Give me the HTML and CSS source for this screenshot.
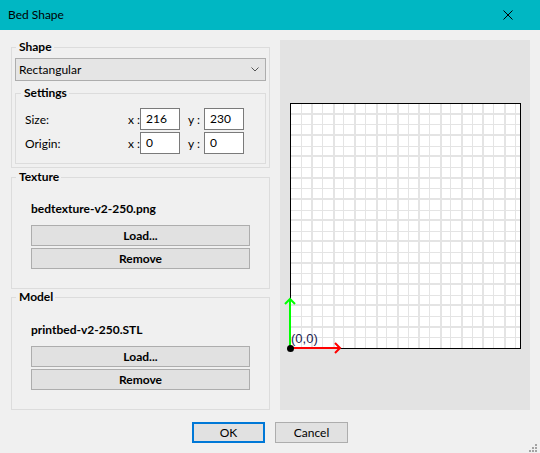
FILE: index.html
```html
<!DOCTYPE html>
<html>
<head>
<meta charset="utf-8">
<title>Bed Shape</title>
<link rel="stylesheet" href="styles.css">
</head>
<body>
<div class="window">
  <div class="titlebar">
    <span class="title">Bed Shape</span>
    <svg class="close" viewBox="0 0 10 10" width="10" height="10"><path d="M0.5 0.5L9.5 9.5M9.5 0.5L0.5 9.5" stroke="#000" stroke-width="1" fill="none"/></svg>
  </div>
  <div class="content">
    <div class="left">
      <fieldset class="group shape">
        <legend>Shape</legend>
        <div class="combo">
          <span>Rectangular</span>
          <svg class="chev" viewBox="0 0 8 5" width="8" height="5"><path d="M0.5 0.5L4 4L7.5 0.5" stroke="#555" stroke-width="1" fill="none"/></svg>
        </div>
        <fieldset class="group settings">
          <legend>Settings</legend>
          <div class="row">
            <span class="lbl">Size:</span>
            <span class="axis">x :</span><span class="input">216</span>
            <span class="axis y">y :</span><span class="input">230</span>
          </div>
          <div class="row">
            <span class="lbl">Origin:</span>
            <span class="axis">x :</span><span class="input">0</span>
            <span class="axis y">y :</span><span class="input">0</span>
          </div>
        </fieldset>
      </fieldset>
      <fieldset class="group file texture">
        <legend>Texture</legend>
        <div class="fname">bedtexture-v2-250.png</div>
        <button class="gbtn first">Load...</button>
        <button class="gbtn">Remove</button>
      </fieldset>
      <fieldset class="group file model">
        <legend>Model</legend>
        <div class="fname">printbed-v2-250.STL</div>
        <button class="gbtn first">Load...</button>
        <button class="gbtn">Remove</button>
      </fieldset>
    </div>
    <div class="preview">
      <svg width="250" height="370" viewBox="0 0 250 370">
        <rect x="10" y="63" width="231" height="245" fill="#fff"/>
        <path d="M21.5 63V308M42.5 63V308M63.5 63V308M85.5 63V308M106.5 63V308M128.5 63V308M149.5 63V308M170.5 63V308M192.5 63V308M213.5 63V308M235.5 63V308M10 297.5H241M10 276.5H241M10 255.5H241M10 233.5H241M10 212.5H241M10 191.5H241M10 170.5H241M10 148.5H241M10 127.5H241M10 106.5H241M10 84.5H241" stroke="#e4e4e4" stroke-width="1" fill="none"/>
        <path d="M32 63V308M54 63V308M75 63V308M97 63V308M118 63V308M139 63V308M161 63V308M182 63V308M203 63V308M225 63V308M10 287H241M10 265H241M10 244H241M10 223H241M10 201H241M10 180H241M10 159H241M10 138H241M10 116H241M10 95H241M10 74H241" stroke="#e4e4e4" stroke-width="2" fill="none"/>
        <rect x="10.5" y="63.5" width="230" height="245" fill="none" stroke="#000" stroke-width="1"/>
        <path d="M240.5 63V309" stroke="#000" stroke-width="1"/>
        <text x="11" y="302.5" class="origin">(0,0)</text>
        <path d="M10 308V259M5 264L10 259L15 264" stroke="#00ff00" stroke-width="2" fill="none"/>
        <path d="M10 308H60M55 303L60 308L55 313" stroke="#ff0000" stroke-width="2" fill="none"/>
        <circle cx="10.5" cy="308.5" r="3.5" fill="#000"/>
      </svg>
    </div>
  </div>
  <div class="footer">
    <button class="btn ok">OK</button>
    <button class="btn">Cancel</button>
  </div>
  <svg class="grip" width="12" height="11" viewBox="0 0 12 11">
    <rect x="7" y="2" width="2" height="2"/>
    <rect x="4" y="5" width="2" height="2"/>
    <rect x="7" y="5" width="2" height="2"/>
    <rect x="1" y="8" width="2" height="2"/>
    <rect x="4" y="8" width="2" height="2"/>
    <rect x="7" y="8" width="2" height="2"/>
  </svg>
</div>
</body>
</html>
```
FILE: styles.css
```css
* { box-sizing: border-box; }
html, body { margin: 0; padding: 0; }
body {
  width: 540px;
  height: 453px;
  background: #f0f0f0;
  font-family: Lato, "Noto Sans", sans-serif;
  font-size: 12px;
  color: #000;
  overflow: hidden;
}
.window { position: relative; width: 540px; height: 453px; }
.titlebar {
  height: 30px;
  background: #00b7c3;
  display: flex;
  align-items: center;
  justify-content: space-between;
  padding: 0 27px 0 8px;
}
.title { font-size: 12px; font-weight: 400; line-height: 16px; }
.close { display: block; }

.content {
  display: flex;
  gap: 10px;
  padding: 10px 10px 0 11px;
  height: 380px;
}
.left {
  width: 259px;
  display: flex;
  flex-direction: column;
  margin-top: -1px;
}
.group {
  margin: 0;
  border: 1px solid #dcdcdc;
  min-width: 0;
}
.group > legend {
  font-weight: bold;
  line-height: 16px;
  padding: 0 2px 0 3px;
  margin-left: 1px;
}
.shape { padding: 0 3px 3px; }
.combo {
  margin-top: 3px;
  height: 23px;
  background: #e5e5e5;
  border: 1px solid #adadad;
  display: flex;
  align-items: center;
  justify-content: space-between;
  padding: 0 6px 0 3px;
}
.chev { display: block; }
.settings {
  margin-top: 4px;
  padding: 7px 9px 9px;
}
.settings > legend { margin-left: -4px; }
.row { display: flex; align-items: center; height: 22px; }
.row + .row { margin-top: 2px; }
.lbl { width: 103px; }
.axis { width: 12px; flex-shrink: 0; white-space: nowrap; }
.axis.y { margin-left: 8px; margin-right: 4px; }
.input {
  width: 40px;
  height: 22px;
  flex-shrink: 0;
  background: #fff;
  border: 1px solid #7a7a7a;
  padding-left: 5px;
  line-height: 20px;
}
.file {
  margin-top: 1px;
  padding: 0 19px 19px;
}
.file > legend { margin-left: -15px; }
.model { margin-top: 0; }
.fname { font-weight: bold; line-height: 16px; margin-top: 16px; }
.model .fname { margin-top: 17px; }
.gbtn {
  display: block;
  width: 100%;
  height: 21px;
  margin: 2px 0 0;
  padding: 0;
  background: #e1e1e1;
  border: 1px solid #adadad;
  font: bold 12px Lato, "Noto Sans", sans-serif;
  color: #000;
}
.gbtn.first { margin-top: 8px; }
.preview {
  width: 250px;
  height: 370px;
  background: #e3e3e3;
}
.preview svg { display: block; }
.origin { font-family: "Liberation Sans", sans-serif; font-size: 13px; fill: #1c1c50; }

.footer {
  display: flex;
  justify-content: center;
  gap: 10px;
  padding-top: 12px;
}
.btn {
  width: 73px;
  height: 21px;
  padding: 0;
  background: #e1e1e1;
  border: 1px solid #adadad;
  font: 12px Lato, "Noto Sans", sans-serif;
  color: #000;
}
.btn.ok { border: 2px solid #0078d7; }
.grip { position: absolute; right: 0; bottom: 0; fill: #a3a3a3; }
```
